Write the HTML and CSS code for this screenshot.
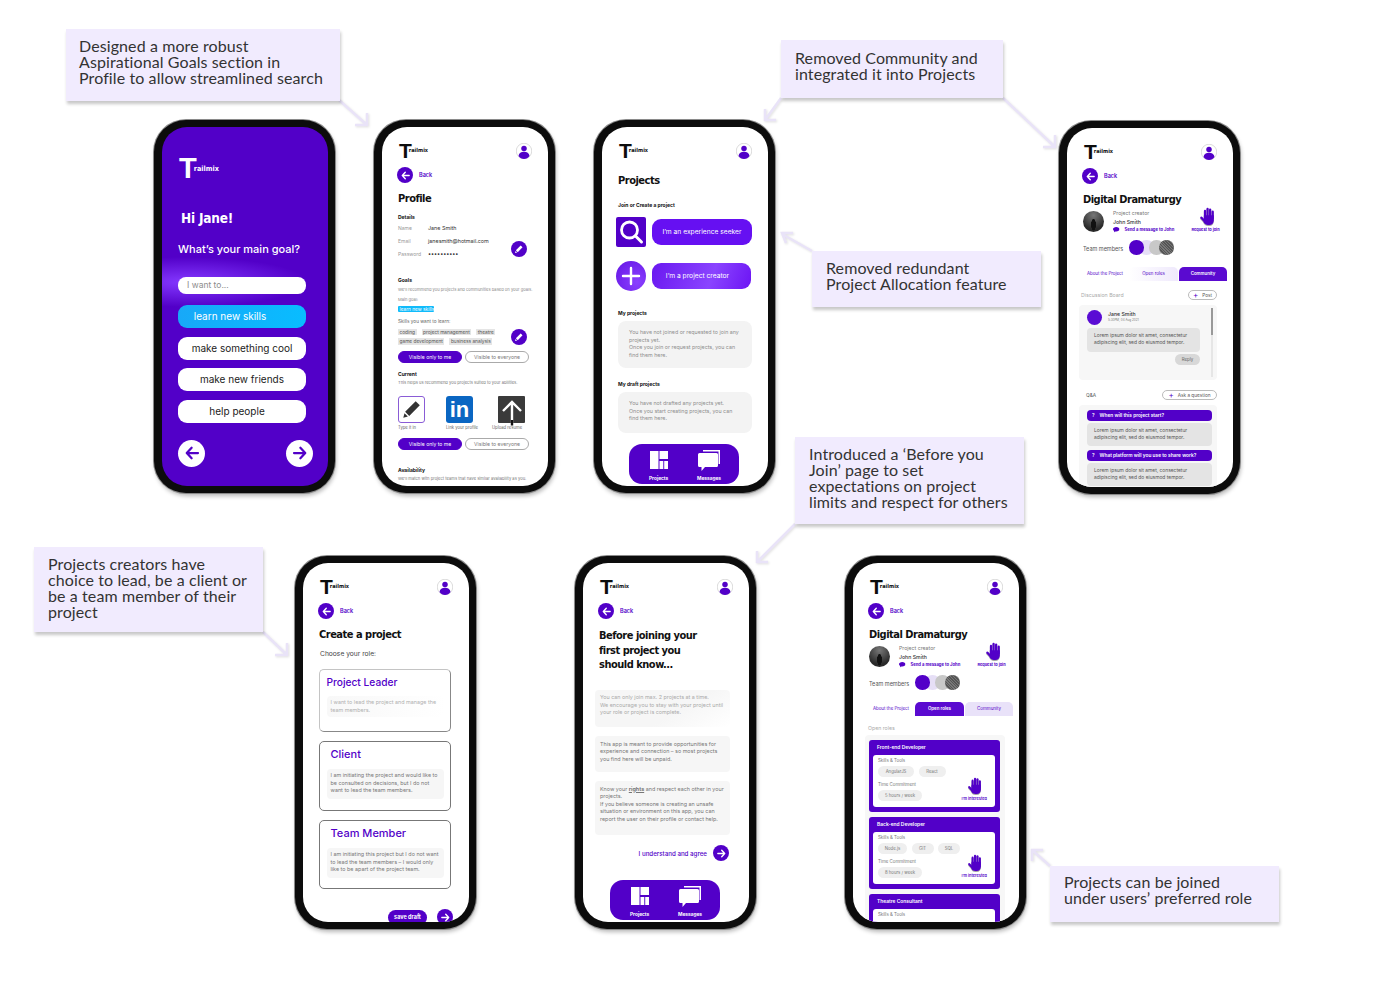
FILE: index.html
```html
<!DOCTYPE html>
<html lang="en">
<head>
  <meta charset="UTF-8" />
  <title>Trailmix iterations</title>
  <link rel="stylesheet" href="styles.css">
</head>
<body>
  <svg class="sprites" width="0" height="0">
    <symbol id="i-left" viewBox="0 0 24 24"><path d="M20 12H5M11.5 5 5 12l6.500 7" fill="none" stroke="currentColor" stroke-width="3" stroke-linecap="round" stroke-linejoin="round"/></symbol>
    <symbol id="i-right" viewBox="0 0 24 24"><path d="M4 12h15M12.5 5l6.500 7-6.500 7" fill="none" stroke="currentColor" stroke-width="3" stroke-linecap="round" stroke-linejoin="round"/></symbol>
    <symbol id="i-user" viewBox="0 0 32 32"><circle cx="16" cy="16" r="15.5" fill="#fff" stroke="#999" stroke-width=".7"/><circle cx="16" cy="11" r="5.5" fill="#5200c8"/><path d="M5 26c1-6 5-8.500 11-8.500S26 20 27 26c-2.500 3.500-6.500 6-11 6s-8.500-2.500-11-6z" fill="#5200c8"/></symbol>
    <symbol id="i-pencil" viewBox="0 0 24 24"><path d="M16 3.500l4.500 4.500L9 19.500 4.500 15zM3.800 16.500l3.700 3.700-5 1.300z" fill="currentColor"/></symbol>
    <symbol id="i-hand" viewBox="0 0 22 26"><g fill="#5200c8"><rect x="6.5" y="4" width="3.2" height="14" rx="1.6"/><rect x="10.2" y="1" width="3.2" height="14" rx="1.6"/><rect x="13.9" y="2" width="3.2" height="14" rx="1.6"/><rect x="17.6" y="5" width="3.2" height="13" rx="1.6"/><path d="M6.5 12h14.300v7c0 4-2.600 7-6.500 7h-2c-3 0-4.500-1.500-6-3.500z"/></g><path d="M9 22 3 15.500" stroke="#5200c8" stroke-width="3.4" stroke-linecap="round"/></symbol>
    <symbol id="i-grid" viewBox="0 0 18 18"><path d="M0 0h8.500v18H0zM9.500 0H18v8H9.500zM9.500 10h3.800v8H9.500zM14.200 10H18v8h-3.800z" fill="#fff"/></symbol>
    <symbol id="i-chat" viewBox="0 0 22 21"><path d="M5 0h17v14h-1.500V1.500H5z" fill="#fff"/><path d="M1.500 3h17a1.500 1.500 0 0 1 1.500 1.500v11a1.500 1.500 0 0 1-1.500 1.500H7l-3.500 4v-4h-2A1.500 1.500 0 0 1 0 15.500v-11A1.500 1.500 0 0 1 1.500 3z" fill="#fff"/></symbol>
    <symbol id="i-bubble" viewBox="0 0 12 10"><path d="M6 0c3.300 0 6 1.800 6 4.200S9.300 8.400 6 8.400c-.6 0-1.100 0-1.600-.1L2 10l.3-2.500C.9 6.700 0 5.600 0 4.200 0 1.800 2.700 0 6 0z" fill="#5200c8"/></symbol>
  </svg>

  <main class="board">
    <svg class="arrows" width="1394" height="981" viewBox="0 0 1394 981">
      <g fill="none" stroke="#e9e3f8" stroke-width="2.5">
        <path d="M339 100l28 25M367 113v12h-12"/>
        <path d="M781 98l-16 22M765 109v11h11"/>
        <path d="M1003 98l52 49M1055 135v12h-12"/>
        <path d="M812 251l-30-17M793 233h-11l4 10"/>
        <path d="M795 524l-38 38M757 551v11h11"/>
        <path d="M263 632l24 23M287 643v12h-12"/>
        <path d="M1050 866l-18-16M1032 861v-11h11"/>
      </g>
    </svg>

    <p class="note note-goals">Designed a more robust<br>Aspirational Goals section in<br>Profile to allow streamlined search</p>
    <p class="note note-community">Removed Community and<br>integrated it into Projects</p>
    <p class="note note-allocation">Removed redundant<br>Project Allocation feature</p>
    <p class="note note-before">Introduced a ‘Before you<br>Join’ page to set<br>expectations on project<br>limits and respect for others</p>
    <p class="note note-creators">Projects creators have<br>choice to lead, be a client or<br>be a team member of their<br>project</p>
    <p class="note note-roles">Projects can be joined<br>under users’ preferred role</p>

    <!-- goal picker -->
    <section class="phone phone-home">
      <div class="screen screen-home">
        <div class="logo logo-large"><span class="logo-t">T</span><span class="logo-word">railmix</span></div>
        <h1 class="hi">Hi Jane!</h1>
        <p class="goal-q">What’s your main goal?</p>
        <div class="goal-input">I want to...</div>
        <div class="goal-list">
          <div class="goal goal-active goal-shift-learn">learn new skills</div>
          <div class="goal">make something cool</div>
          <div class="goal">make new friends</div>
          <div class="goal goal-shift-help">help people</div>
        </div>
        <div class="goal-nav">
          <span class="round-white"><svg><use href="#i-left"/></svg></span>
          <span class="round-white"><svg><use href="#i-right"/></svg></span>
        </div>
      </div>
    </section>

    <!-- profile -->
    <section class="phone phone-profile">
      <div class="screen">
        <header class="top">
          <div class="logo"><span class="logo-t">T</span><span class="logo-word">railmix</span></div>
          <svg class="avatar"><use href="#i-user"/></svg>
        </header>
        <div class="back"><span class="round"><svg><use href="#i-left"/></svg></span>Back</div>
        <h2 class="title">Profile</h2>
        <h3 class="sub sub-details">Details</h3>
        <div class="with-edit">
          <div class="details">
            <div class="detail"><span>Name</span><b>Jane Smith</b></div>
            <div class="detail"><span>Email</span><b>janesmith@hotmail.com</b></div>
            <div class="detail"><span>Password</span><b>••••••••••</b></div>
          </div>
          <span class="round edit"><svg><use href="#i-pencil"/></svg></span>
        </div>
        <h3 class="sub sub-goals">Goals</h3>
        <p class="hint hint-1">We’ll recommend you projects and communities based on your goals.</p>
        <p class="hint hint-2">Main goal:</p>
        <span class="tag tag-main">learn new skills</span>
        <p class="hint hint-3">Skills you want to learn:</p>
        <div class="with-edit with-edit-skills">
          <div class="tags">
            <div class="tag-row"><span class="tag">coding</span><span class="tag">project management</span><span class="tag">theatre</span></div>
            <div class="tag-row"><span class="tag">game development</span><span class="tag">business analysis</span></div>
          </div>
          <span class="round edit"><svg><use href="#i-pencil"/></svg></span>
        </div>
        <div class="toggle-row toggle-row-a"><span class="toggle toggle-on">Visible only to me</span><span class="toggle">Visible to everyone</span></div>
        <h3 class="sub sub-current">Current</h3>
        <p class="hint hint-4">This helps us recommend you projects suited to your abilities.</p>
        <div class="imports">
          <div class="import import-a"><span class="import-box box-type"><svg><use href="#i-pencil"/></svg></span><span class="import-label">Type it in</span></div>
          <div class="import import-b"><span class="import-box box-in">in</span><span class="import-label">Link your profile</span></div>
          <div class="import import-c"><span class="import-box box-up"><svg viewBox="0 0 26 31"><path d="M13 27V6M4 15l9-9 9 9" fill="none" stroke="#fff" stroke-width="2.4"/><path d="M13 29.500V24" stroke="#111" stroke-width="2.4"/></svg></span><span class="import-label">Upload resume</span></div>
        </div>
        <div class="toggle-row toggle-row-b"><span class="toggle toggle-on">Visible only to me</span><span class="toggle">Visible to everyone</span></div>
        <h3 class="sub sub-avail">Availability</h3>
        <p class="hint hint-5">We’ll match with project teams that have similar availability as you.</p>
      </div>
    </section>

    <!-- projects home -->
    <section class="phone phone-projects">
      <div class="screen">
        <header class="top">
          <div class="logo"><span class="logo-t">T</span><span class="logo-word">railmix</span></div>
          <svg class="avatar"><use href="#i-user"/></svg>
        </header>
        <h2 class="title title-projects">Projects</h2>
        <h3 class="sub sub-join">Join or Create a project</h3>
        <div class="action action-seek">
          <span class="action-icon icon-search"><svg viewBox="0 0 30 30"><circle cx="13.5" cy="13" r="8" fill="none" stroke="#fff" stroke-width="2.8"/><path d="M19.5 19l6 6" stroke="#fff" stroke-width="3" stroke-linecap="round"/></svg></span>
          <span class="action-btn">I’m an experience seeker</span>
        </div>
        <div class="action action-create">
          <span class="action-icon icon-plus"><svg viewBox="0 0 30 30"><path d="M15 7v16M7 15h16" stroke="#fff" stroke-width="2.4" stroke-linecap="round"/></svg></span>
          <span class="action-btn action-btn-light">I’m a project creator</span>
        </div>
        <h3 class="sub sub-mine">My projects</h3>
        <div class="empty empty-a">You have not joined or requested to join any<br>projects yet.<br>Once you join or request projects, you can<br>find them here.</div>
        <h3 class="sub sub-draft">My draft projects</h3>
        <div class="empty empty-b">You have not drafted any projects yet.<br>Once you start creating projects, you can<br>find them here.</div>
        <nav class="tabbar">
          <div class="tabbar-item"><svg class="ic-grid"><use href="#i-grid"/></svg><span>Projects</span></div>
          <div class="tabbar-item"><svg class="ic-chat"><use href="#i-chat"/></svg><span>Messages</span></div>
        </nav>
      </div>
    </section>

    <!-- project detail, community tab -->
    <section class="phone phone-community">
      <div class="screen">
        <header class="top">
          <div class="logo"><span class="logo-t">T</span><span class="logo-word">railmix</span></div>
          <svg class="avatar"><use href="#i-user"/></svg>
        </header>
        <div class="back"><span class="round"><svg><use href="#i-left"/></svg></span>Back</div>
        <h2 class="title">Digital Dramaturgy</h2>
        <div class="creator">
          <span class="photo"></span>
          <div class="creator-meta">
            <span class="creator-role">Project creator</span>
            <b class="creator-name">John Smith</b>
            <span class="creator-msg"><svg><use href="#i-bubble"/></svg>Send a message to John</span>
          </div>
          <div class="request"><svg><use href="#i-hand"/></svg><span>Request to join</span></div>
        </div>
        <div class="team"><span class="team-label">Team members</span><span class="dots"><i class="dot dot-1"></i><i class="dot dot-2"></i><i class="dot dot-3"></i><i class="dot dot-4"></i></span></div>
        <div class="tabs">
          <span class="tab tab-about">About the Project</span>
          <span class="tab tab-fade">Open roles</span>
          <span class="tab tab-on">Community</span>
        </div>
        <div class="bar-head bar-head-board"><span class="muted">Discussion Board</span><span class="pill-add pill-post"><i>+</i>Post</span></div>
        <div class="panel panel-board">
          <div class="poster"><span class="poster-pic"></span><div><b>Jane Smith</b><small>5:30PM, 04 Aug 2021</small></div></div>
          <p class="comment">Lorem ipsum dolor sit amet, consectetur<br>adipiscing elit, sed do eiusmod tempor.</p>
          <span class="reply">Reply</span>
          <span class="scroll"></span>
        </div>
        <div class="bar-head bar-head-qa"><span class="qa-label">Q&amp;A</span><span class="pill-add pill-ask"><i>+</i>Ask a question</span></div>
        <div class="panel panel-qa">
          <div class="question"><i>?</i>When will this project start?</div>
          <p class="comment answer">Lorem ipsum dolor sit amet, consectetur<br>adipiscing elit, sed do eiusmod tempor.</p>
          <div class="question"><i>?</i>What platform will you use to share work?</div>
          <p class="comment answer">Lorem ipsum dolor sit amet, consectetur<br>adipiscing elit, sed do eiusmod tempor.</p>
        </div>
      </div>
    </section>

    <!-- create a project -->
    <section class="phone phone-create">
      <div class="screen">
        <header class="top">
          <div class="logo"><span class="logo-t">T</span><span class="logo-word">railmix</span></div>
          <svg class="avatar"><use href="#i-user"/></svg>
        </header>
        <div class="back"><span class="round"><svg><use href="#i-left"/></svg></span>Back</div>
        <h2 class="title">Create a project</h2>
        <p class="choose">Choose your role:</p>
        <div class="role role-lead">
          <h4 class="role-name role-name-lead">Project Leader</h4>
          <p class="role-text">I want to lead the project and manage the<br>team members.</p>
        </div>
        <div class="role role-client">
          <h4 class="role-name">Client</h4>
          <p class="role-text">I am initiating the project and would like to<br>be consulted on decisions, but I do not<br>want to lead the team members.</p>
        </div>
        <div class="role role-member">
          <h4 class="role-name">Team Member</h4>
          <p class="role-text">I am initiating this project but I do not want<br>to lead the team members – I would only<br>like to be apart of the project team.</p>
        </div>
        <div class="draft-row"><span class="save-draft">save draft</span><span class="round"><svg><use href="#i-right"/></svg></span></div>
      </div>
    </section>

    <!-- before joining -->
    <section class="phone phone-before">
      <div class="screen">
        <header class="top">
          <div class="logo"><span class="logo-t">T</span><span class="logo-word">railmix</span></div>
          <svg class="avatar"><use href="#i-user"/></svg>
        </header>
        <div class="back"><span class="round"><svg><use href="#i-left"/></svg></span>Back</div>
        <h2 class="title title-long">Before joining your<br>first project you<br>should know...</h2>
        <p class="rule rule-a">You can only join max. 2 projects at a time.<br>We encourage you to stay with your project until<br>your role or project is complete.</p>
        <p class="rule rule-b">This app is meant to provide opportunities for<br>experience and connection – so most projects<br>you find here will be unpaid.</p>
        <p class="rule rule-c">Know your <b>rights</b> and respect each other in your<br>projects.<br>If you believe someone is creating an unsafe<br>situation or environment on this app, you can<br>report the user on their profile or contact help.</p>
        <div class="agree">I understand and agree<span class="round"><svg><use href="#i-right"/></svg></span></div>
        <nav class="tabbar">
          <div class="tabbar-item"><svg class="ic-grid"><use href="#i-grid"/></svg><span>Projects</span></div>
          <div class="tabbar-item"><svg class="ic-chat"><use href="#i-chat"/></svg><span>Messages</span></div>
        </nav>
      </div>
    </section>

    <!-- project detail, open roles tab -->
    <section class="phone phone-open">
      <div class="screen">
        <header class="top">
          <div class="logo"><span class="logo-t">T</span><span class="logo-word">railmix</span></div>
          <svg class="avatar"><use href="#i-user"/></svg>
        </header>
        <div class="back"><span class="round"><svg><use href="#i-left"/></svg></span>Back</div>
        <h2 class="title">Digital Dramaturgy</h2>
        <div class="creator">
          <span class="photo"></span>
          <div class="creator-meta">
            <span class="creator-role">Project creator</span>
            <b class="creator-name">John Smith</b>
            <span class="creator-msg"><svg><use href="#i-bubble"/></svg>Send a message to John</span>
          </div>
          <div class="request"><svg><use href="#i-hand"/></svg><span>Request to join</span></div>
        </div>
        <div class="team"><span class="team-label">Team members</span><span class="dots"><i class="dot dot-1"></i><i class="dot dot-2"></i><i class="dot dot-3"></i><i class="dot dot-4"></i></span></div>
        <div class="tabs">
          <span class="tab tab-about">About the Project</span>
          <span class="tab tab-on">Open roles</span>
          <span class="tab tab-soft">Community</span>
        </div>
        <p class="muted open-label">Open roles</p>
        <div class="panel panel-roles">
          <article class="job">
            <h5 class="job-head">Front-end Developer</h5>
            <div class="job-body">
              <div>
                <p class="job-label">Skills &amp; Tools</p>
                <div class="chips"><span class="chip chip-w36">AngularJS</span><span class="chip chip-w27">React</span></div>
                <p class="job-label job-label-2">Time Commitment</p>
                <div class="chips"><span class="chip chip-w44">5 hours / week</span></div>
              </div>
              <div class="interest"><svg><use href="#i-hand"/></svg><span>I’m interested</span></div>
            </div>
          </article>
          <article class="job">
            <h5 class="job-head">Back-end Developer</h5>
            <div class="job-body">
              <div>
                <p class="job-label">Skills &amp; Tools</p>
                <div class="chips"><span class="chip chip-w29">Node.js</span><span class="chip chip-w22">GIT</span><span class="chip chip-w22">SQL</span></div>
                <p class="job-label job-label-2">Time Commitment</p>
                <div class="chips"><span class="chip chip-w44">8 hours / week</span></div>
              </div>
              <div class="interest"><svg><use href="#i-hand"/></svg><span>I’m interested</span></div>
            </div>
          </article>
          <article class="job">
            <h5 class="job-head">Theatre Consultant</h5>
            <div class="job-body">
              <div><p class="job-label">Skills &amp; Tools</p></div>
            </div>
          </article>
        </div>
      </div>
    </section>
  </main>
</body>
</html>
```

FILE: styles.css
```css
* { box-sizing: border-box; }
body {
  margin: 0;
  background: #fff;
  font-family: Inter, "Noto Sans", sans-serif;
  color: #333;
}
h1, h2, h3, h4, h5, p { margin: 0; font-weight: inherit; font-size: inherit; }
i { font-style: normal; }
svg { display: block; }
.sprites { position: absolute; }

.board {
  position: relative;
  width: 1394px;
  height: 981px;
  overflow: hidden;
}
.arrows {
  position: absolute;
  left: 0;
  top: 0;
  filter: drop-shadow(1px 1px 1px rgba(0, 0, 0, 0.12));
}

/* callouts */
.note {
  position: absolute;
  background: #f1ebfe;
  box-shadow: 1px 3px 3px rgba(0, 0, 0, 0.22);
  font-family: Lato, sans-serif;
  font-size: 16px;
  line-height: 16px;
  color: #333;
  padding-left: 14px;
  letter-spacing: 0.1px;
}
.note-goals { left: 66px; top: 29px; width: 274px; height: 72px; padding: 9px 0 0 13px; }
.note-community { left: 781px; top: 40px; width: 222px; height: 58px; padding-top: 10px; }
.note-allocation { left: 812px; top: 251px; width: 229px; height: 56px; padding-top: 9px; }
.note-before { left: 795px; top: 437px; width: 229px; height: 87px; padding-top: 9px; }
.note-creators { left: 34px; top: 547px; width: 229px; height: 85px; padding-top: 9px; }
.note-roles { left: 1050px; top: 866px; width: 229px; height: 56px; padding-top: 8px; }

/* phones */
.phone {
  position: absolute;
  width: 181px;
  height: 373px;
  background: #0c0c0c;
  border-radius: 32px;
  border-style: solid;
  border-color: #0c0c0c;
  border-width: 7px 7px 7px 8px;
  box-shadow: 0 0 0 1px #8a8a8a, 1px 3px 4px rgba(0, 0, 0, 0.28);
}
.phone-home { left: 154px; top: 120px; }
.phone-profile { left: 374px; top: 120px; }
.phone-projects { left: 594px; top: 120px; }
.phone-community { left: 1059px; top: 121px; }
.phone-create { left: 295px; top: 556px; }
.phone-before { left: 575px; top: 556px; }
.phone-open { left: 845px; top: 556px; }

.screen {
  position: relative;
  height: 100%;
  padding: 16px 16px 0;
  background: #fff;
  border-radius: 25px;
  overflow: hidden;
  font-size: 5px;
}

/* logo + header */
.top {
  display: flex;
  justify-content: space-between;
  height: 16px;
}
.logo {
  display: flex;
  align-items: flex-start;
  margin-left: 1px;
  color: #0c0c0c;
}
.logo-t {
  font-family: "Liberation Sans", sans-serif;
  font-weight: 700;
  font-size: 21px;
  line-height: 15px;
  height: 15px;
}
.logo-word {
  font-family: "DejaVu Sans", sans-serif;
  font-weight: 700;
  font-stretch: condensed;
  font-size: 5.5px;
  line-height: 6px;
  margin: 4px 0 0 -3px;
}
.logo-large { color: #fff; }
.logo-large .logo-t { font-size: 29px; line-height: 21px; height: 21px; }
.logo-large .logo-word { font-size: 7.2px; line-height: 8px; margin: 7px 0 0 -3px; }
.avatar { width: 16px; height: 16px; }

.back {
  display: flex;
  align-items: center;
  gap: 6px;
  height: 16px;
  margin: 8px 0 0 -1px;
  color: #5200c8;
  font-size: 5.5px;
  font-weight: 600;
}
.round {
  display: flex;
  align-items: center;
  justify-content: center;
  flex: none;
  width: 16px;
  height: 16px;
  border-radius: 50%;
  background: #5200c8;
  color: #fff;
}
.round svg { width: 11px; height: 11px; }

.title {
  height: 15px;
  margin-top: 8px;
  font-family: "DejaVu Sans", sans-serif;
  font-weight: 700;
  font-stretch: condensed;
  font-size: 11px;
  letter-spacing: -0.5px;
  line-height: 16px;
  color: #111;
  white-space: nowrap;
}
.title-projects { margin-top: 14px; }
.title-long { height: auto; margin-top: 10px; line-height: 14.5px; }

.sub { font-size: 5px; font-weight: 700; line-height: 6px; color: #111; }
.hint { font-size: 4.1px; line-height: 5px; color: #888; white-space: nowrap; }

/* home */
.screen-home {
  background:
    radial-gradient(ellipse 120px 25px at 15% 155px, #8438ff 0, rgba(132, 56, 255, 0) 100%),
    #5200c8;
  padding: 31px 22px 0 16px;
  color: #fff;
}
.hi {
  margin: 30px 0 0 3px;
  font-family: "DejaVu Sans", sans-serif;
  font-weight: 700;
  font-stretch: condensed;
  font-size: 13.5px;
  letter-spacing: -0.2px;
  line-height: 18px;
}
.goal-q {
  margin-top: 15px;
  font-size: 11px;
  font-weight: 500;
  line-height: 14px;
  white-space: nowrap;
}
.goal-input {
  margin-top: 21px;
  height: 17px;
  padding-left: 9px;
  background: #fff;
  border-radius: 8px;
  color: #8d8d8d;
  font-size: 8.5px;
  line-height: 17px;
}
.goal-list {
  display: flex;
  flex-direction: column;
  gap: 8.5px;
  margin-top: 11px;
}
.goal {
  height: 23px;
  background: #fff;
  border-radius: 9px;
  color: #222;
  font-size: 10px;
  line-height: 23px;
  text-align: center;
}
.goal-active {
  background: linear-gradient(100deg, #18a8f8, #08bdff);
  color: #fff;
}
.goal-shift-learn { padding-right: 24px; }
.goal-shift-help { padding-right: 10px; }
.goal-nav {
  display: flex;
  justify-content: space-between;
  margin: 17px -7px 0 0;
}
.round-white {
  display: flex;
  align-items: center;
  justify-content: center;
  width: 27px;
  height: 27px;
  border-radius: 50%;
  background: #fff;
  color: #5200c8;
}
.round-white svg { width: 18px; height: 18px; }

/* profile */
.sub-details { margin-top: 8px; }
.with-edit {
  display: flex;
  align-items: flex-end;
  justify-content: space-between;
  padding-right: 5px;
}
.details { padding-top: 5px; display: flex; flex-direction: column; gap: 7px; }
.detail {
  display: grid;
  grid-template-columns: 30px 1fr;
  line-height: 6px;
  font-size: 5.4px;
}
.detail span { color: #999; font-size: 5px; }
.detail b { font-weight: 400; color: #333; }
.edit svg { width: 10px; height: 10px; }
.sub-goals { margin-top: 20px; }
.hint-1 { margin-top: 4px; }
.hint-2 { margin-top: 4.5px; }
.hint-3 { margin-top: 7px; color: #666; font-size: 4.7px; }
.tag {
  display: inline-block;
  height: 6.5px;
  padding: 0 1.5px;
  background: #e5e5e5;
  color: #555;
  font-size: 4.8px;
  line-height: 6.5px;
  white-space: nowrap;
}
.tag-main {
  display: block;
  width: 36px;
  margin: 4px 0 0;
  background: #10bbfb;
  color: #fff;
  border-radius: 1px;
}
.with-edit-skills { margin-top: 4.5px; }
.tags { display: flex; flex-direction: column; gap: 3px; }
.tag-row { display: flex; gap: 5px; }
.toggle-row { display: flex; gap: 3px; }
.toggle-row-a { margin-top: 6px; }
.toggle-row-b { margin-top: 7.5px; }
.toggle {
  width: 64px;
  height: 12.5px;
  border: 0.5px solid #aaa;
  border-radius: 7px;
  text-align: center;
  color: #777;
  font-size: 5.1px;
  line-height: 11.5px;
  white-space: nowrap;
}
.toggle-on { background: #5200c8; border-color: #5200c8; color: #fff; }
.sub-current { margin-top: 8px; }
.hint-4 { margin-top: 2.5px; color: #777; }
.imports { display: flex; margin-top: 11px; }
.import { display: flex; flex-direction: column; flex: none; }
.import-a { width: 48px; }
.import-b { width: 49px; }
.import-c { width: 34px; }
.import-box {
  display: flex;
  align-items: center;
  justify-content: center;
  width: 27px;
  height: 27px;
  border-radius: 3px;
}
.import-label {
  margin-top: 3.5px;
  font-size: 4.2px;
  line-height: 4px;
  color: #666;
  white-space: nowrap;
}
.box-type { border: 1px solid #8a5cd6; color: #333; }
.box-type svg { width: 22px; height: 22px; }
.box-in {
  background: #0a66c2;
  color: #fff;
  font-family: "Liberation Sans", sans-serif;
  font-size: 22px;
  font-weight: 700;
  line-height: 27px;
}
.box-up { background: #3a3a3a; border-radius: 1px; align-items: flex-start; }
.box-up svg { width: 26px; height: 31px; flex: none; }
.import-c .import-box { margin-left: 3px; }
.import-c .import-label { margin-left: -3px; }
.sub-avail { margin-top: 17px; }
.hint-5 { margin-top: 3px; color: #777; }

/* projects */
.sub-join { margin-top: 14px; }
.action { display: flex; align-items: center; gap: 6px; margin-left: -2px; }
.action-seek { margin-top: 9px; }
.action-create { margin-top: 14px; }
.action-icon { flex: none; width: 30px; height: 30px; }
.icon-search { background: #5200c8; border-radius: 2px; }
.icon-plus { background: radial-gradient(circle at 70% 70%, #8a40ff, #6414e4); border-radius: 50%; }
.action-btn {
  width: 100px;
  height: 26.5px;
  border-radius: 9px;
  background: #6610f2;
  color: #fff;
  font-size: 6.7px;
  line-height: 26.5px;
  text-align: center;
  white-space: nowrap;
}
.action-btn-light { background: linear-gradient(110deg, #6a18f0, #8a44ff 60%, #6c14f4); width: 99px; padding-right: 8px; }
.sub-mine { margin-top: 19px; }
.empty {
  width: 134px;
  margin-top: 5px;
  padding: 8px 0 0 11px;
  background: #f3f3f3;
  border-radius: 8px;
  color: #8d8d8d;
  font-size: 5.3px;
  line-height: 7.5px;
  white-space: nowrap;
}
.empty-a { height: 47px; }
.empty-b { height: 41px; }
.sub-draft { margin-top: 13px; }
.tabbar {
  position: absolute;
  left: 27px;
  bottom: 2.5px;
  display: flex;
  justify-content: space-between;
  width: 110px;
  height: 40px;
  padding: 6px 18px 0 20px;
  background: #5200c8;
  border-radius: 13px;
  color: #fff;
}
.tabbar-item {
  display: flex;
  flex-direction: column;
  align-items: center;
  justify-content: space-between;
  height: 31px;
  font-size: 4.8px;
  font-weight: 700;
  line-height: 5px;
}
.ic-grid { width: 18px; height: 18px; margin-top: 1px; }
.ic-chat { width: 22px; height: 21px; }

/* project detail */
.creator { display: flex; height: 24px; margin-top: 1px; }
.photo {
  flex: none;
  width: 21px;
  height: 21px;
  margin-top: 3px;
  border-radius: 50%;
  background:
    radial-gradient(ellipse 2.5px 6px at 50% 65%, #111 90%, rgba(0, 0, 0, 0)),
    radial-gradient(circle at 50% 20%, #777, #2a2a2a 70%);
}
.creator-meta { display: flex; flex: none; flex-direction: column; margin-left: 9px; width: 78px; }
.creator-role { margin-top: 3px; font-size: 5.2px; line-height: 5px; color: #777; }
.creator-name { margin-top: 2.5px; font-size: 5.2px; font-weight: 500; line-height: 6px; color: #333; }
.creator-msg {
  display: flex;
  align-items: center;
  gap: 5px;
  margin-top: 2.5px;
  font-size: 4.2px;
  font-weight: 700;
  line-height: 5px;
  color: #5200c8;
  white-space: nowrap;
}
.creator-msg svg { width: 6.5px; height: 5.5px; }
.request {
  display: flex;
  flex: none;
  flex-direction: column;
  align-items: center;
  width: 29px;
  font-size: 3.9px;
  font-weight: 700;
  line-height: 4px;
  color: #5200c8;
  white-space: nowrap;
}
.request svg {
  width: 16px;
  height: 18px;
  margin: -1px 0 3px 3px;
  filter: drop-shadow(0 1px 0.5px rgba(0, 0, 0, 0.35));
}
.team {
  display: flex;
  align-items: center;
  height: 15px;
  margin-top: 8px;
  font-size: 5.5px;
  color: #555;
}
.team-label { padding-top: 3px; }
.dots { display: flex; margin-left: 6px; }
.dot { width: 14.5px; height: 14.5px; border-radius: 50%; margin-left: -4.5px; }
.dot-1 { position: relative; z-index: 1; background: #5200c8; margin-left: 0; }
.dot-2 { background: #e6dff6; }
.dot-3 { background: #c8c8c8; }
.dot-4 { background: repeating-linear-gradient(45deg, #555, #555 1px, #777 1px, #777 2px); }
.tabs { display: flex; gap: 1px; height: 14px; margin: 11.5px 0 0 -1px; }
.tab {
  flex: none;
  border-radius: 5px 5px 0 0;
  font-size: 4.4px;
  line-height: 14px;
  text-align: center;
  color: #5200c8;
  white-space: nowrap;
}
.tab-about { width: 46px; }
.tab:nth-child(2) { width: 49px; }
.tab:nth-child(3) { width: 48px; }
.tab-on { background: #5a0ad0; color: #fff; font-weight: 600; }
.tab-fade { background: linear-gradient(to right, #fff, #efe9fc); }
.tab-soft { background: #e9e2f9; }
.muted { color: #aaa; font-size: 5.2px; line-height: 6px; }
.open-label { margin: 9px 0 0 -1px; }
.bar-head { display: flex; align-items: center; justify-content: space-between; height: 10px; }
.bar-head-board { margin: 9px 0 0 -2px; }
.bar-head-qa { margin-top: 10px; }
.qa-label { margin-left: 3px; color: #555; font-size: 4.8px; }
.pill-add {
  display: flex;
  align-items: center;
  justify-content: center;
  gap: 4px;
  height: 10px;
  border: 0.5px solid #bbb;
  border-radius: 5px;
  color: #555;
  font-size: 4.7px;
  white-space: nowrap;
}
.pill-add i { color: #5200c8; font-size: 8px; line-height: 8px; }
.pill-post { width: 29px; }
.pill-ask { width: 55px; }
.panel {
  position: relative;
  margin-left: -4px;
  background: #f7f7f7;
  border-radius: 4px;
}
.panel-board { width: 138px; height: 75px; margin-top: 5px; padding: 5px 0 0 8px; }
.panel-qa { width: 138px; height: 100px; margin-top: 5px; padding: 5px 5px 0 8px; }
.poster { display: flex; gap: 6px; height: 15px; align-items: center; }
.poster-pic { width: 15px; height: 15px; border-radius: 50%; background: #5a0cd4; }
.poster b { display: block; font-size: 5.2px; font-weight: 500; line-height: 5.5px; color: #333; }
.poster small { display: block; font-size: 3px; line-height: 4px; color: #777; }
.comment {
  width: 113px;
  height: 24px;
  margin-top: 3px;
  padding: 4.5px 0 0 7px;
  background: #e4e4e4;
  border-radius: 4px;
  color: #555;
  font-size: 4.9px;
  line-height: 7.2px;
  white-space: nowrap;
}
.reply {
  display: block;
  width: 25px;
  height: 11px;
  margin: 2px 0 0 88px;
  background: #d8d8d8;
  border-radius: 5.5px;
  color: #666;
  font-size: 4.4px;
  line-height: 11px;
  text-align: center;
}
.scroll {
  position: absolute;
  right: 4.5px;
  top: 3px;
  width: 1.5px;
  height: 69px;
  background: linear-gradient(#999 39%, #e6e6e6 39%);
}
.question {
  display: flex;
  gap: 5px;
  width: 125px;
  height: 11px;
  margin-bottom: 2px;
  padding-left: 5px;
  background: #5200c8;
  border-radius: 4px;
  color: #fff;
  font-size: 4.8px;
  font-weight: 600;
  line-height: 11px;
  white-space: nowrap;
}
.answer { width: 125px; height: 23px; margin: 0 0 4px; }

/* create a project */
.choose { margin: 8px 0 0 1px; color: #444; font-size: 6.7px; line-height: 8px; }
.role {
  width: 132px;
  padding: 0 6.5px;
  border: 1px solid #777;
  border-radius: 5px;
}
.role-lead { height: 63px; margin-top: 11px; border-color: #c4c4c4 #888 #888 #c4c4c4; }
.role-client { height: 70px; margin-top: 9px; }
.role-member { height: 69px; margin-top: 9px; }
.role-name {
  height: 27px;
  padding: 5px 0 0 4px;
  color: #5200c8;
  font-size: 11px;
  font-weight: 500;
  line-height: 14px;
  white-space: nowrap;
}
.role-name-lead { padding-left: 0; height: 26px; font-size: 10.2px; }
.role-text {
  height: 30px;
  padding: 3px 0 0 4px;
  background: #f6f6f6;
  border-radius: 4px;
  color: #777;
  font-size: 5.4px;
  line-height: 7.6px;
  white-space: nowrap;
}
.role-lead .role-text { color: #b0b0b0; background: linear-gradient(100deg, #f8f8f8, #fff); height: 21px; }
.draft-row { display: flex; align-items: center; gap: 10px; margin: 20px 0 0 69px; }
.save-draft {
  width: 40px;
  height: 15px;
  background: #5200c8;
  border-radius: 8px;
  color: #fff;
  font-size: 5.5px;
  font-weight: 700;
  line-height: 15px;
  text-align: center;
}

/* before joining */
.rule {
  width: 135px;
  margin-left: -4px;
  padding: 4.5px 0 0 5px;
  background: #f6f6f6;
  border-radius: 4px;
  color: #777;
  font-size: 5.4px;
  line-height: 7.6px;
  white-space: nowrap;
}
.rule b { font-weight: 700; text-decoration: underline; }
.rule-a { height: 37.5px; margin-top: 17px; color: #aaa; background: linear-gradient(150deg, #f6f6f6 60%, #fff); }
.rule-b { height: 36px; margin-top: 9px; }
.rule-c { height: 54px; margin-top: 9px; }
.agree {
  display: flex;
  align-items: center;
  justify-content: flex-end;
  gap: 6px;
  width: 130px;
  margin-top: 10px;
  color: #5200c8;
  font-size: 6.2px;
  font-weight: 500;
}

/* open roles */
.panel-roles { width: 140px; height: 200px; margin-top: 4px; padding: 5px 0 0 4px; }
.job {
  width: 130.5px;
  height: 72px;
  margin-bottom: 5px;
  padding: 0 4.5px 0 4px;
  background: #5200c8;
  border-radius: 3px;
}
.job-head {
  height: 15px;
  padding-left: 4px;
  color: #fff;
  font-size: 4.9px;
  font-weight: 600;
  line-height: 15px;
  white-space: nowrap;
}
.job-body {
  display: flex;
  justify-content: space-between;
  height: 52px;
  padding: 3px 8px 0 5px;
  background: #fff;
  border-radius: 3px;
}
.job-label { color: #777; font-size: 4.4px; line-height: 6px; }
.job-label-2 { margin-top: 5.5px; }
.chips { display: flex; gap: 4.5px; margin-top: 2px; }
.chip {
  height: 11px;
  background: #efefef;
  border-radius: 5.5px;
  color: #777;
  font-size: 4.3px;
  line-height: 11px;
  text-align: center;
  white-space: nowrap;
}
.chip-w36 { width: 36px; }
.chip-w27 { width: 27px; }
.chip-w44 { width: 44px; }
.chip-w29 { width: 29px; }
.chip-w22 { width: 22px; }
.interest {
  display: flex;
  flex-direction: column;
  align-items: center;
  align-self: flex-end;
  padding-bottom: 6px;
  color: #5200c8;
  font-size: 3.9px;
  font-weight: 600;
  line-height: 4px;
  white-space: nowrap;
}
.interest svg {
  width: 15px;
  height: 17px;
  margin-bottom: 3px;
  filter: drop-shadow(0 1px 0.5px rgba(0, 0, 0, 0.35));
}
```
